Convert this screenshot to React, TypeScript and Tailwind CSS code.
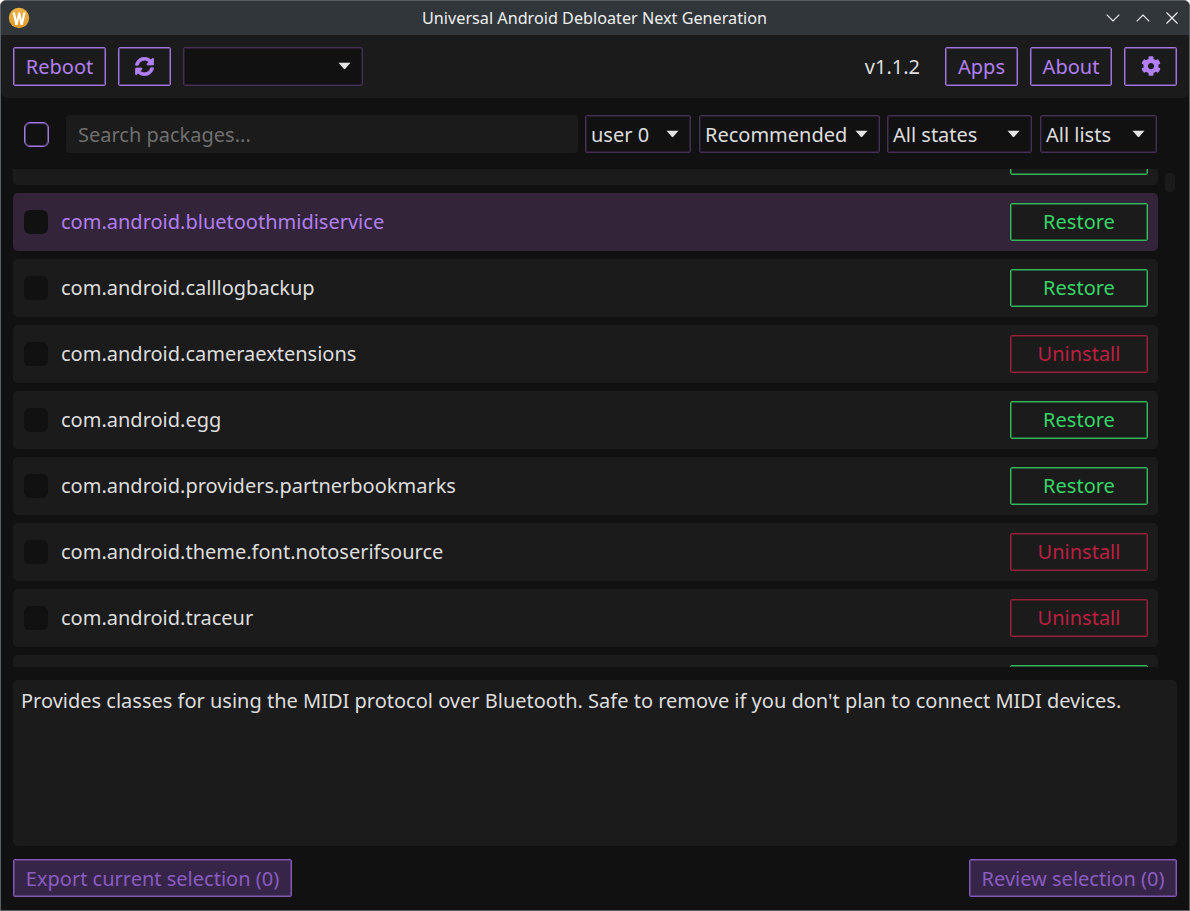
import { FaCog, FaSyncAlt } from "react-icons/fa";

const font = "font-['Noto_Sans',sans-serif]";

const rows: { name: string; action: "Restore" | "Uninstall"; selected?: boolean }[] = [
  { name: "com.android.bluetoothmidiservice", action: "Restore", selected: true },
  { name: "com.android.calllogbackup", action: "Restore" },
  { name: "com.android.cameraextensions", action: "Uninstall" },
  { name: "com.android.egg", action: "Restore" },
  { name: "com.android.providers.partnerbookmarks", action: "Restore" },
  { name: "com.android.theme.font.notoserifsource", action: "Uninstall" },
  { name: "com.android.traceur", action: "Uninstall" },
];

function Caret() {
  return (
    <svg width="13" height="8" viewBox="0 0 13 8" className="shrink-0">
      <path d="M.5.8h12L7 7h-1z" fill="#e4e4e4" />
    </svg>
  );
}

function OutlineButton({ children, className = "" }: { children: React.ReactNode; className?: string }) {
  return (
    <div className={`h-[39px] flex items-center justify-center rounded-[2px] border border-[#a273e2] shadow-[inset_0_0_0_1px_rgba(154,108,216,0.5)] pt-[2px] text-[#b27ff5] text-[20px] leading-none ${className}`}>
      {children}
    </div>
  );
}

function Select({ label, className = "" }: { label: string; className?: string }) {
  return (
    <div className={`h-[38px] flex items-center justify-between rounded-[2px] border border-[#452f57] shadow-[inset_0_0_0_1px_rgba(64,44,80,0.5)] bg-[#111111] pl-[5px] pr-[11px] text-[20px] text-[#dedede] ${className}`}>
      <span className="pt-[2px]">{label}</span>
      <Caret />
    </div>
  );
}

function ActionBox({ className = "", children }: { className?: string; children?: React.ReactNode }) {
  return (
    <div className={`w-[138px] h-[38px] shrink-0 flex items-center justify-center rounded-[2px] border bg-[#1b1b1b] text-[20px] ${className}`}>
      {children}
    </div>
  );
}

const green = "border-[#34b85c] shadow-[inset_0_0_0_1px_rgba(50,176,88,0.5)] text-[#35d765]";
const red = "border-[#971f3c] shadow-[inset_0_0_0_1px_rgba(143,31,58,0.5)] text-[#bd2042]";

function Row({ name, action, selected }: { name: string; action: "Restore" | "Uninstall"; selected?: boolean }) {
  return (
    <div className={`h-[58px] shrink-0 flex items-center rounded-[5px] pl-[11px] pr-[10px] ${selected ? "bg-[#33243a]" : "bg-[#1b1b1b]"}`}>
      <div className="w-[24px] h-[24px] rounded-[6px] bg-[#111111]" />
      <div className={`ml-[13px] flex-1 text-[20px] ${selected ? "text-[#b27ff5]" : "text-[#dedede]"}`}>{name}</div>
      <ActionBox className={action === "Restore" ? green : red}>{action}</ActionBox>
    </div>
  );
}

function ClippedRow() {
  return (
    <div className="h-[58px] shrink-0 flex items-center justify-end rounded-[5px] bg-[#1b1b1b] pr-[10px]">
      <ActionBox className={green} />
    </div>
  );
}

export default function App() {
  return (
    <div className={`${font} w-[1190px] h-[911px] bg-[#111111] overflow-hidden flex flex-col border border-[#5a5f64] rounded-t-[6px]`}>
      {/* Title bar */}
      <div className="h-[34px] shrink-0 bg-[#31363b] flex items-center relative">
        <svg width="22" height="22" viewBox="0 0 22 22" className="ml-[7px] shrink-0">
          <defs>
            <linearGradient id="wl" x1="0" y1="0" x2="0" y2="1">
              <stop offset="0" stopColor="#efb244" />
              <stop offset="1" stopColor="#dc9a2c" />
            </linearGradient>
          </defs>
          <circle cx="11" cy="11" r="10.2" fill="url(#wl)" />
          <path d="M4.6 5.5 L7.4 18 L9.6 18 L11 11 L12.6 18 L14.8 18 L17.6 5.5 L15.3 5.5 L13.8 13 L12.2 5.5 L10.2 5.5 L8.6 13 L7 5.5 Z" fill="#ffffff" />
        </svg>
        <div className="absolute inset-0 flex items-center justify-center pr-[1px] text-[16.2px] text-[#eff0f1]">
          Universal Android Debloater Next Generation
        </div>
        <div className="ml-auto mr-[11px] flex items-center gap-[16px] relative">
          <svg width="14" height="8" viewBox="0 0 14 8"><path d="M.7.7 7 7 13.3.7" fill="none" stroke="#eff0f1" strokeWidth="1.1" /></svg>
          <svg width="14" height="8" viewBox="0 0 14 8"><path d="M.7 7.3 7 1l6.3 6.3" fill="none" stroke="#eff0f1" strokeWidth="1.1" /></svg>
          <svg width="12" height="12" viewBox="0 0 12 12"><path d="M.5.5l11 11M11.500.5l-11 11" fill="none" stroke="#eff0f1" strokeWidth="1.1" /></svg>
        </div>
      </div>

      {/* Header */}
      <div className="h-[63px] shrink-0 bg-[#1b1b1b] rounded-b-[6px] flex items-center pl-[12px] pr-[12px] pb-[1px]">
        <OutlineButton className="w-[93px]">Reboot</OutlineButton>
        <OutlineButton className="w-[53px] ml-[12px] !pt-0">
          <FaSyncAlt className="w-[19px] h-[19px] stroke-[20px]" />
        </OutlineButton>
        <div className="ml-[12px] w-[180px] h-[39px] flex items-center justify-end rounded-[2px] border border-[#452f57] shadow-[inset_0_0_0_1px_rgba(64,44,80,0.5)] bg-[#111111] pr-[11px]">
          <Caret />
        </div>
        <div className="ml-auto pt-[2px] text-[20px] text-[#dedede]">v1.1.2</div>
        <OutlineButton className="w-[73px] ml-[25px]">Apps</OutlineButton>
        <OutlineButton className="w-[82px] ml-[12px]">About</OutlineButton>
        <OutlineButton className="w-[53px] ml-[12px] !pt-0">
          <FaCog className="w-[20px] h-[20px]" />
        </OutlineButton>
      </div>

      {/* Filter row */}
      <div className="h-[71px] shrink-0 flex items-center pl-[23px] pr-[32px] pt-[1px]">
        <div className="w-[25px] h-[25px] shrink-0 rounded-[6px] border border-[#a678e6] shadow-[inset_0_0_0_1px_rgba(166,120,230,0.5)]" />
        <div className="ml-[17px] w-[512px] h-[38px] shrink-0 flex items-center rounded-[4px] bg-[#1b1b1b] pl-[12px] pt-[2px] text-[20px] text-[#6f6f6f]">
          Search packages...
        </div>
        <Select label="user 0" className="ml-[7px] w-[106px] shrink-0" />
        <Select label="Recommended" className="ml-[8px] w-[181px] shrink-0" />
        <Select label="All states" className="ml-[7px] w-[145px] shrink-0" />
        <Select label="All lists" className="ml-[8px] w-[117px] shrink-0" />
      </div>

      {/* List */}
      <div className="h-[498px] shrink-0 overflow-hidden relative pl-[12px] pr-[31px]">
        <div className="flex flex-col gap-[8px] -mt-[42px]">
          <ClippedRow />
          {rows.map((r) => (
            <Row key={r.name} {...r} />
          ))}
          <ClippedRow />
        </div>
        <div className="absolute left-[1164px] top-[4px] w-[10px] h-[19px] rounded-[4px] bg-[#1b1b1b]" />
      </div>

      {/* Description */}
      <div className="mt-[13px] mx-[12px] h-[166px] shrink-0 rounded-[5px] bg-[#1b1b1b] px-[8px] pt-[7px] text-[20px] leading-[28px] text-[#dedede]">
        Provides classes for using the MIDI protocol over Bluetooth. Safe to remove if you don't plan to connect MIDI devices.
      </div>

      {/* Footer */}
      <div className="mt-[13px] mx-[12px] flex justify-between">
        <div className="w-[279px] h-[38px] flex items-center justify-center rounded-[2px] border border-[#8259b6] shadow-[inset_0_0_0_1px_rgba(126,87,176,0.5)] bg-[#372549] pt-[2px] text-[20px] text-[#8a5cc0]">
          Export current selection (0)
        </div>
        <div className="w-[208px] h-[38px] flex items-center justify-center rounded-[2px] border border-[#8259b6] shadow-[inset_0_0_0_1px_rgba(126,87,176,0.5)] bg-[#372549] pt-[2px] text-[20px] text-[#8a5cc0]">
          Review selection (0)
        </div>
      </div>
    </div>
  );
}
